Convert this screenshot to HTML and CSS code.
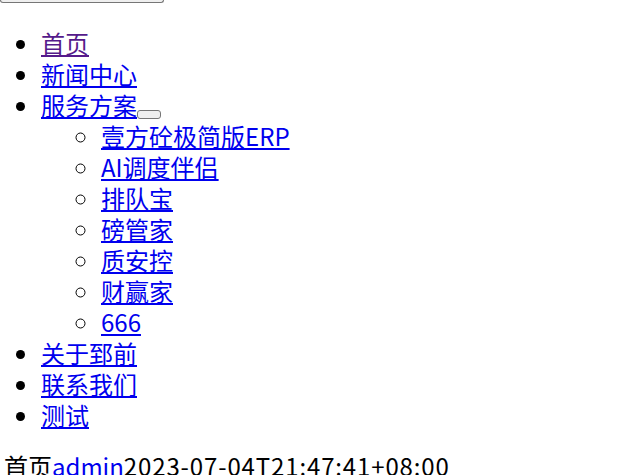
FILE: index.html
```html
<!DOCTYPE html>
<html lang="zh">
<head>
<meta charset="utf-8">
<link rel="stylesheet" href="styles.css">
</head>
<body>
<div class="topbtn"></div>
<ul class="nav">
  <li><a class="visited" href="#">首页</a></li>
  <li><a href="#">新闻中心</a></li>
  <li><a href="#">服务方案</a><button class="toggle" type="button"></button>
    <ul class="sub">
      <li><a href="#">壹方砼极简版ERP</a></li>
      <li><a href="#">AI调度伴侣</a></li>
      <li><a href="#">排队宝</a></li>
      <li><a href="#">磅管家</a></li>
      <li><a href="#">质安控</a></li>
      <li><a href="#">财赢家</a></li>
      <li><a href="#">666</a></li>
    </ul>
  </li>
  <li><a href="#">关于郅前</a></li>
  <li><a href="#">联系我们</a></li>
  <li><a href="#">测试</a></li>
</ul>
<div class="meta">首页<a href="#">admin</a><span class="date">2023-07-04T21:47:41+08:00</span></div>
</body>
</html>
```
FILE: styles.css
```css
html, body {
  margin: 0;
  padding: 0;
  background: #fff;
}
body {
  font-family: "Noto Sans CJK SC", "Noto Sans", sans-serif;
  font-size: 24px;
  line-height: 31px;
  color: #000;
  overflow: hidden;
}
.topbtn {
  width: 162px;
  height: 2px;
  border: 1px solid #767676;
  border-top: none;
  border-radius: 0 0 3px 3px;
  background: #efefef;
}
a {
  color: #0000ee;
  text-decoration: underline;
}
a.visited {
  color: #551a8b;
}
.nav {
  margin: 24px 0 20px;
  padding-left: 41px;
  list-style: disc;
}
.sub {
  margin: 0;
  padding-left: 60px;
  list-style: circle;
}
.toggle {
  display: inline-block;
  width: 24px;
  height: 9px;
  padding: 0;
  margin: 0;
  border: 1px solid #767676;
  border-radius: 3px;
  background: #efefef;
  vertical-align: -3px;
}
.meta {
  padding-left: 4px;
  white-space: nowrap;
}
.date {
  letter-spacing: 0.87px;
}
```
